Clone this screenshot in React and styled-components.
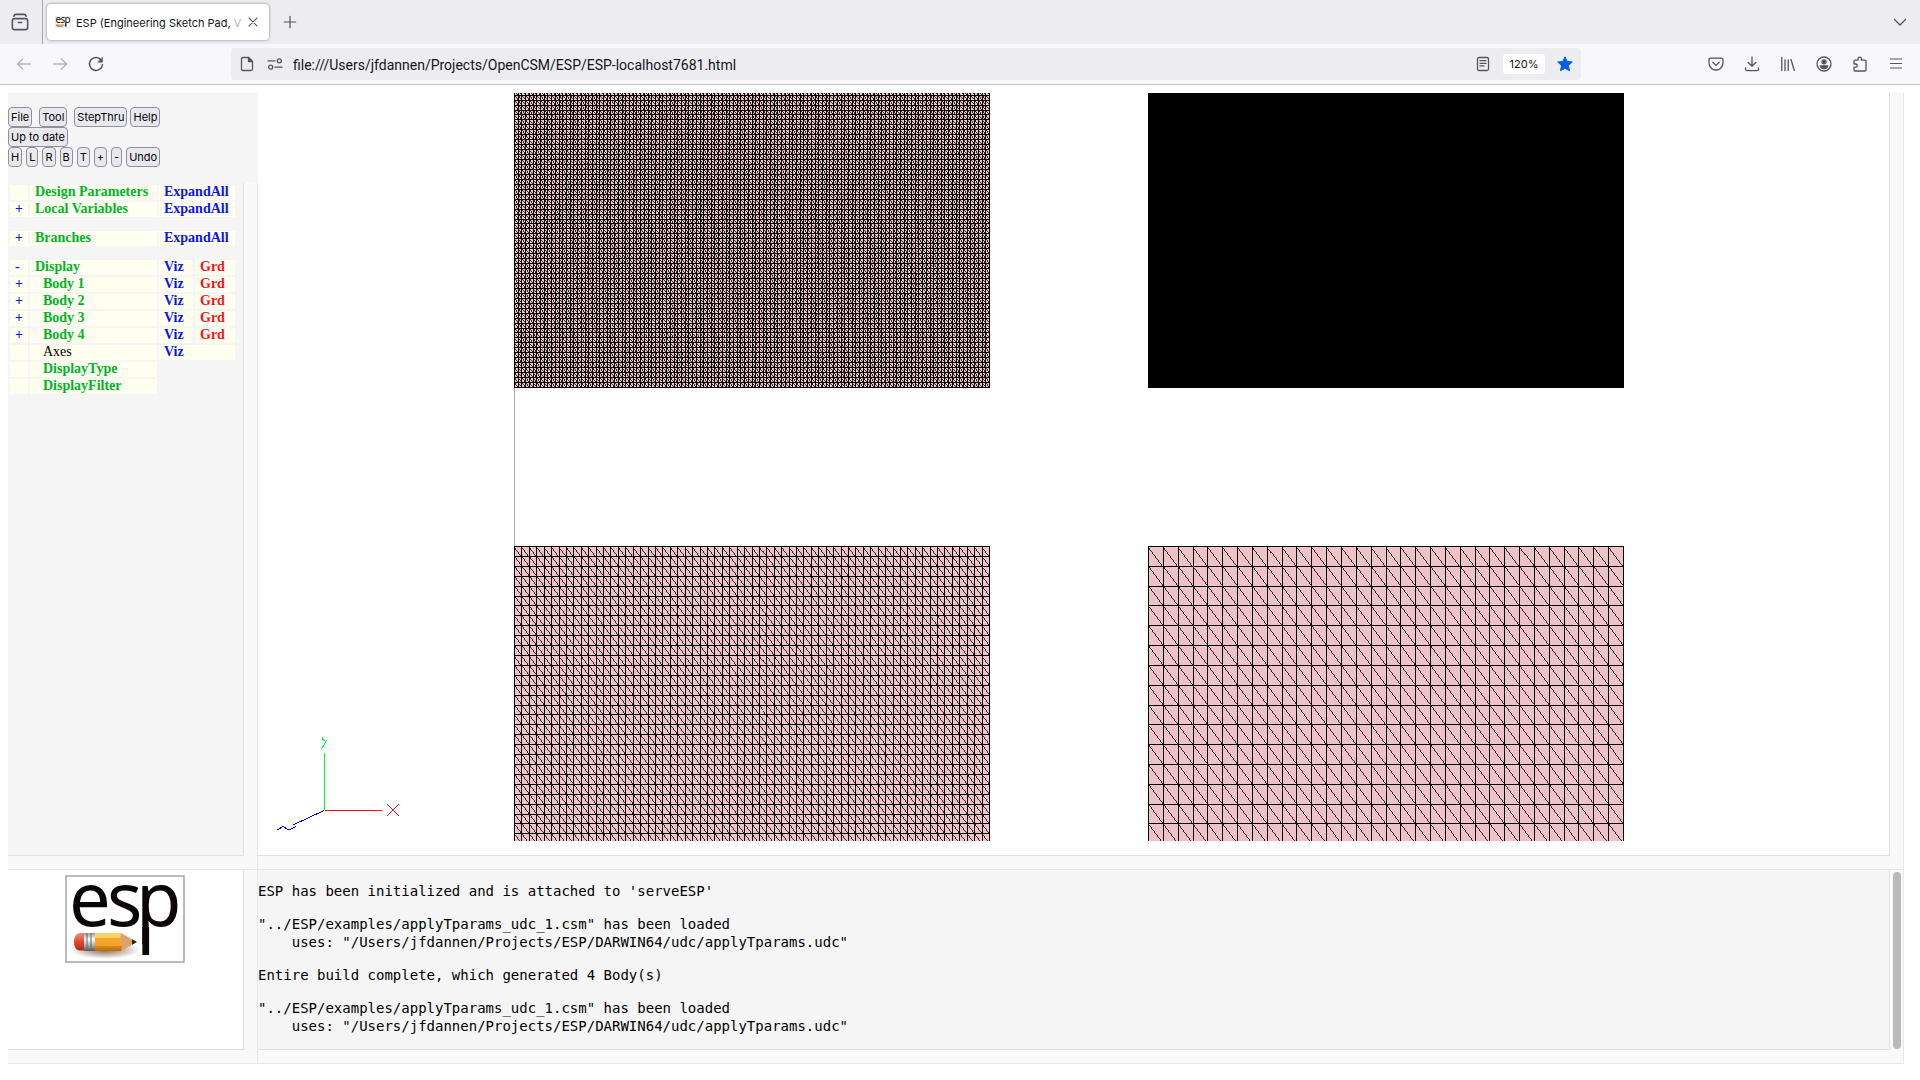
import React from "react";
import styled, { createGlobalStyle } from "styled-components";

const GlobalStyle = createGlobalStyle`
  * { box-sizing: border-box; }
  body { margin: 0; background: #fff; }
`;

const ui = `Inter, "Liberation Sans", sans-serif`;

const Window = styled.div`
  display: flex;
  flex-direction: column;
  height: 100vh;
  overflow: hidden;
  font-family: ${ui};
`;

/* ---------- browser chrome ---------- */

const TabStrip = styled.header`
  display: flex;
  align-items: center;
  flex: none;
  height: 44px;
  background: #edecf1;
`;

const StripLead = styled.div`
  display: flex;
  align-items: center;
  justify-content: center;
  width: 43px;
  height: 44px;
  padding-right: 2px;
  border-right: 1px solid #a9a8b0;
`;

const IconButton = styled.button`
  display: flex;
  align-items: center;
  justify-content: center;
  flex: none;
  width: ${(p) => p.$w || 36}px;
  height: 32px;
  padding: 0;
  border: 0;
  background: none;
  color: ${(p) => (p.$dim ? "#b3b2b9" : "#55545f")};
`;

const Tab = styled.div`
  display: flex;
  align-items: center;
  width: 222px;
  height: 36px;
  margin: 0 3px 0 4px;
  padding: 0 5px 0 8px;
  border-radius: 4px;
  background: #fff;
  box-shadow: 0 0 3px rgba(0, 0, 0, 0.45);
`;

const TabTitle = styled.span`
  flex: 1;
  margin-left: 5px;
  padding-top: 2px;
  white-space: nowrap;
  font-size: 11px;
  line-height: 18px;
  color: #15141a;
`;

const Faded = styled.span`
  color: #b5b4ba;
`;

const Spacer = styled.div`
  flex: 1;
`;

const Toolbar = styled.nav`
  display: flex;
  align-items: center;
  flex: none;
  height: 41px;
  padding: 0 6px;
  border-bottom: 1px solid #c2c2c6;
  background: #f8f8fa;
`;

const AddressBar = styled.div`
  display: flex;
  align-items: center;
  flex: 1;
  height: 32px;
  margin: 0 117px;
  padding: 0 2px;
  border-radius: 4px;
  background: #edecf1;
`;

const Address = styled.input`
  flex: 1;
  min-width: 0;
  margin-left: 4px;
  padding: 2px 0 0;
  border: 0;
  outline: 0;
  background: none;
  font-family: Roboto, ${ui};
  font-size: 14px;
  color: #15141a;
`;

const ZoomBadge = styled.button`
  width: 42px;
  height: 20px;
  margin: 0 6px;
  padding: 0;
  border: 0;
  border-radius: 3px;
  background: #fff;
  font-family: ${ui};
  font-size: 11px;
  color: #15141a;
`;

/* ---------- page ---------- */

const Page = styled.main`
  display: grid;
  grid-template-columns: 250px minmax(0, 1fr);
  grid-template-rows: minmax(0, 1fr) 194px;
  flex: 1;
  min-height: 0;
  padding: 8px 16px 16px 8px;
`;

const Sidebar = styled.aside`
  display: flex;
  flex-direction: column;
  min-height: 0;
  background: #f5f5f5;
`;

const Frame = styled.div`
  position: relative;
  display: flex;
  flex: 1;
  min-height: 0;
  min-width: 0;
  padding: 0 13px 13px 0;
  border: solid #e8e8e8;
  border-width: 0 1px 1px 0;
  background: #f9f9f9;
`;

const FrameBody = styled.div`
  flex: 1;
  min-width: 0;
  border: solid #e1e1e1;
  border-width: 0 1px 1px 0;
  background: ${(p) => p.$bg || "#fff"};
`;

const Thumb = styled.div`
  position: absolute;
  top: 2px;
  right: 2px;
  bottom: 14px;
  width: 8px;
  border-radius: 4px;
  background: #bababa;
`;

const Controls = styled.div`
  display: flex;
  flex-direction: column;
  height: 90px;
  padding-top: 14px;
`;

const ControlRow = styled.div`
  display: flex;
  gap: ${(p) => p.$gap || 3}px;
`;

const Command = styled.button`
  height: 20px;
  padding: 0 2px;
  border: 1px solid #8f8f9d;
  border-radius: 4px;
  background: #e9e9ed;
  font-family: ${ui};
  font-size: 11px;
  line-height: 18px;
  color: #000;
`;

const Tree = styled.table`
  width: 229px;
  table-layout: fixed;
  border-spacing: 2px;
  font: bold 14px/13px "Liberation Serif", serif;
`;

const Cell = styled.td`
  height: 15px;
  padding: 0 0 0 ${(p) => (p.$indent ? 13 : 5)}px;
  background: #ffffef;
  white-space: nowrap;
  vertical-align: top;
  font-weight: ${(p) => (p.$plain ? "normal" : "bold")};
  color: ${(p) => p.$color || "#00b42a"};
`;

const Gap = styled.td`
  height: 10px;
  padding: 0;
`;

const Log = styled.pre`
  margin: 0 0 15px;
  font: 14px/18px "DejaVu Sans Mono", monospace;
  color: #000;
`;

const LogList = styled.div`
  padding-top: 12px;
`;

const LogoHolder = styled.div`
  display: flex;
  justify-content: center;
  padding: 5px 2px 0 0;
`;

const Canvas = styled.svg`
  display: block;
  width: 100%;
  height: 100%;
`;

const LogoArt = styled.svg`
  overflow: visible;
`;

/* ---------- icons ---------- */

const Icon = ({ size = 16, sw = 1.3, children }) => (
  <svg width={size} height={size} viewBox="0 0 16 16" fill="none" stroke="currentColor" strokeWidth={sw} strokeLinecap="round" strokeLinejoin="round" aria-hidden="true">
    {children}
  </svg>
);

const Logo = ({ width, height }) => (
  <LogoArt width={width} height={height} viewBox="0 0 120 88" aria-label="esp logo">
    <defs>
      <linearGradient id="wood" x1="0" y1="0" x2="0" y2="1">
        <stop offset="0" stopColor="#fbd568" />
        <stop offset=".28" stopColor="#fbd060" />
        <stop offset=".3" stopColor="#f6a92c" />
        <stop offset=".7" stopColor="#f3a227" />
        <stop offset=".72" stopColor="#d98a1c" />
        <stop offset="1" stopColor="#b8690f" />
      </linearGradient>
      <linearGradient id="rubber" x1="0" y1="0" x2="0" y2="1">
        <stop offset="0" stopColor="#f4907c" />
        <stop offset=".5" stopColor="#e5472f" />
        <stop offset="1" stopColor="#a82a1a" />
      </linearGradient>
      <linearGradient id="metal" x1="0" y1="0" x2="0" y2="1">
        <stop offset="0" stopColor="#999" />
        <stop offset=".35" stopColor="#fff" />
        <stop offset=".7" stopColor="#aaa" />
        <stop offset="1" stopColor="#555" />
      </linearGradient>
      <radialGradient id="shade">
        <stop offset="0" stopColor="#5a3a20" stopOpacity=".75" />
        <stop offset="1" stopColor="#5a3a20" stopOpacity="0" />
      </radialGradient>
    </defs>
    <rect x="1" y="1" width="118" height="86" fill="#fff" stroke="#a1a8ab" strokeWidth="1.5" />
    <text y="51" x="4 42 71" fontFamily="Noto Sans, Open Sans, sans-serif" fontSize="74" fill="#0a0606">esp</text>
    <rect x="77.400" y="52" width="6.700" height="28" fill="#0a0606" />
    <ellipse cx="40" cy="75" rx="35" ry="9" fill="url(#shade)" />
    <path d="M20 58H14Q9 60 9 67T14 75.500H20Z" fill="url(#rubber)" />
    <rect x="19" y="58" width="12" height="18" fill="url(#metal)" />
    <path d="M22 58V76M26 58V76" stroke="#666" strokeWidth="1" />
    <path d="M30 58H56L60 67L56 76H30Z" fill="url(#wood)" />
    <path d="M56 58L72 67L56 76L57 70L55 64Z" fill="#dca36d" />
    <path d="M67 64.200L72 67L67 69.800Z" fill="#222" />
  </LogoArt>
);

/* ---------- 3D view ---------- */

const Mesh = ({ x, y, width, height, cols, cellH, fromBottom }) => {
  const cellW = width / cols;
  const rows = Math.ceil(height / cellH);
  const y0 = fromBottom ? y + height - rows * cellH : y;
  const bottom = y + height;
  const id = `clip${x}-${y}`;
  let grid = "";
  let diag = "";
  for (let c = 0; c <= cols; c++) grid += `M${Math.round(x + c * cellW) + 0.5} ${y}V${bottom}`;
  for (let r = 0; r <= rows; r++) {
    const ry = Math.round(y0 + r * cellH) + 0.5;
    grid += `M${x} ${ry}H${x + width + 1}`;
  }
  for (let r = 0; r < rows; r++) {
    for (let c = 0; c < cols; c++) {
      diag += `M${(x + c * cellW + 0.5).toFixed(2)} ${(y0 + r * cellH + 0.5).toFixed(2)}l${cellW.toFixed(2)} ${cellH.toFixed(2)}`;
    }
  }
  return (
    <g clipPath={`url(#${id})`} shapeRendering="crispEdges">
      <clipPath id={id}>
        <rect x={x} y={y} width={width + 1} height={height + (fromBottom ? 1 : 0)} />
      </clipPath>
      <rect x={x} y={y} width={width} height={height} fill="#edc3c9" />
      <path d={diag} stroke="#000" strokeWidth="0.800" fill="none" />
      <path d={grid} stroke="#000" fill="none" />
    </g>
  );
};

const Scene = () => (
  <Canvas role="img" aria-label="Tessellated bodies">
    <Mesh x={256} y={0} width={475} height={294} cols={128} cellH={4.955} fromBottom />
    <rect x="890" y="0" width="476" height="295" fill="#000" />
    <path d="M256.500 295V453" stroke="#aaa" shapeRendering="crispEdges" />
    <Mesh x={256} y={453} width={475} height={295} cols={64} cellH={9.91} />
    <Mesh x={890} y={453} width={475} height={295} cols={32} cellH={19.82} />
    <g fill="none" shapeRendering="crispEdges">
      <path d="M66.500 660V717" stroke="#00ff2a" />
      <path d="M64.500 644L65 646.500L67.500 648.500M69 647.500L67.500 648.500L66 652L63.500 656" stroke="#00ff2a" />
      <path d="M67 717.500H124M129 711L141 723M141 711L129 723" stroke="#f01020" />
      <path d="M66 717.500L35 732M19 737L25 733.500L31 737L38 733.500" stroke="#0000ff" />
    </g>
  </Canvas>
);

/* ---------- tree ---------- */

const BLUE = "#0a14f5";
const RED = "#fa0f1e";

const rows = [
  { label: "Design Parameters", expand: true },
  { mark: "+", label: "Local Variables", expand: true },
  null,
  { mark: "+", label: "Branches", expand: true },
  null,
  { mark: "-", label: "Display", viz: true, grd: true },
  { mark: "+", label: "Body 1", indent: true, viz: true, grd: true },
  { mark: "+", label: "Body 2", indent: true, viz: true, grd: true },
  { mark: "+", label: "Body 3", indent: true, viz: true, grd: true },
  { mark: "+", label: "Body 4", indent: true, viz: true, grd: true },
  { label: "Axes", indent: true, plain: true, viz: true },
  { label: "DisplayType", indent: true },
  { label: "DisplayFilter", indent: true },
];

const TreeRow = ({ row }) =>
  row ? (
    <tr>
      <Cell $color={BLUE}>{row.mark}</Cell>
      <Cell $indent={row.indent} $plain={row.plain} $color={row.plain && "#000"}>{row.label}</Cell>
      {row.expand && <Cell colSpan={2} $color={BLUE}>ExpandAll</Cell>}
      {row.viz && <Cell colSpan={row.grd ? 1 : 2} $color={BLUE}>Viz</Cell>}
      {row.grd && <Cell $color={RED}>Grd</Cell>}
    </tr>
  ) : (
    <tr>
      <Gap colSpan={4} />
    </tr>
  );

const loaded = `"../ESP/examples/applyTparams_udc_1.csm" has been loaded
    uses: "/Users/jfdannen/Projects/ESP/DARWIN64/udc/applyTparams.udc"`;

const messages = [
  "ESP has been initialized and is attached to 'serveESP'",
  loaded,
  "Entire build complete, which generated 4 Body(s)",
  loaded,
];

export default function App() {
  return (
    <Window>
      <GlobalStyle />
      <TabStrip>
        <StripLead>
          <IconButton aria-label="Recent browsing">
            <Icon size={18} sw={1.4}>
              <rect x="1.200" y="5" width="13.600" height="9.800" rx="2" />
              <path d="M2.500 2.800Q3 1.200 4.500 1.200H11.500Q13 1.200 13.500 2.800M6.500 8.500H9.500" />
            </Icon>
          </IconButton>
        </StripLead>
        <Tab>
          <Logo width={16} height={14} />
          <TabTitle>ESP (Engineering Sketch Pad, <Faded>V</Faded></TabTitle>
          <IconButton $w={24} aria-label="Close tab">
            <Icon size={14} sw={1.4}><path d="M3.500 3.500L12.500 12.500M12.500 3.500L3.500 12.500" /></Icon>
          </IconButton>
        </Tab>
        <IconButton aria-label="New tab">
          <Icon size={14} sw={1.4}><path d="M8 1.500V14.500M1.500 8H14.500" /></Icon>
        </IconButton>
        <Spacer />
        <IconButton $w={40} aria-label="List tabs">
          <Icon size={16}><path d="M2.500 5.500L8 11L13.500 5.500" /></Icon>
        </IconButton>
      </TabStrip>

      <Toolbar>
        <IconButton $dim aria-label="Back">
          <Icon><path d="M14.500 8H1.500M6.500 3L1.500 8L6.500 13" /></Icon>
        </IconButton>
        <IconButton $dim aria-label="Forward">
          <Icon><path d="M1.500 8H14.500M9.500 3L14.500 8L9.500 13" /></Icon>
        </IconButton>
        <IconButton aria-label="Reload">
          <Icon sw={1.5}>
            <path d="M13.200 4A6.500 6.500 0 1 0 14.500 8.500" />
            <path d="M14.500 1.500V6.200H9.800Z" fill="currentColor" strokeWidth="0.500" />
          </Icon>
        </IconButton>
        <AddressBar>
          <IconButton $w={28} aria-label="Page information">
            <Icon>
              <path d="M4 1.500H9.500L13.500 5.500V13Q13.500 14.500 12 14.500H4Q2.500 14.500 2.500 13V3Q2.500 1.500 4 1.500Z" />
              <path d="M9.500 1.500V5.500H13.500Z" fill="currentColor" />
            </Icon>
          </IconButton>
          <IconButton $w={28} aria-label="Permissions">
            <Icon>
              <circle cx="12.300" cy="4.800" r="2" />
              <circle cx="3.700" cy="11.200" r="2" />
              <path d="M1 4.800H8M8 11.200H15" />
            </Icon>
          </IconButton>
          <Address aria-label="Address" defaultValue="file:///Users/jfdannen/Projects/OpenCSM/ESP/ESP-localhost7681.html" />
          <IconButton $w={28} aria-label="Reader view">
            <Icon size={16}>
              <rect x="2.500" y="1.500" width="11" height="13" rx="1.500" />
              <path d="M5 4.700H11M5 7.300H11M5 9.900H9" />
            </Icon>
          </IconButton>
          <ZoomBadge>120%</ZoomBadge>
          <IconButton $w={28} aria-label="Bookmark">
            <svg width="16" height="16" viewBox="0 0 16 16" aria-hidden="true">
              <path d="M8 .8L10.200 5.400L15.300 6L11.500 9.500L12.500 14.800L8 12.300L3.500 14.800L4.500 9.500L.7 6L5.800 5.400Z" fill="#0560df" stroke="#0560df" strokeLinejoin="round" />
            </svg>
          </IconButton>
        </AddressBar>
        <IconButton aria-label="Pocket">
          <Icon>
            <path d="M2.500 2.200H13.500Q15 2.200 15 3.700V7A7 7 0 0 1 1 7V3.700Q1 2.200 2.500 2.200Z" />
            <path d="M4.800 6.300L8 9.400L11.200 6.300" />
          </Icon>
        </IconButton>
        <IconButton aria-label="Downloads">
          <Icon><path d="M8 .8V10M4.200 6.500L8 10.300L11.800 6.500M1.500 11.800V13Q1.500 14.600 3 14.600H13Q14.500 14.600 14.500 13V11.800" /></Icon>
        </IconButton>
        <IconButton aria-label="Library">
          <Icon><path d="M1.800 1.500V14.500M5 4V14.500M8.200 4V14.500M11 3.500L14.300 14.500" /></Icon>
        </IconButton>
        <IconButton aria-label="Account">
          <Icon>
            <circle cx="8" cy="8" r="7" />
            <circle cx="8" cy="5.800" r="2" fill="currentColor" />
            <path d="M4.300 9.800H11.700Q11 12.500 8 12.500T4.300 9.800Z" fill="currentColor" />
          </Icon>
        </IconButton>
        <IconButton aria-label="Extensions">
          <Icon><path d="M6 4.200V2.800A1.700 1.700 0 0 1 9.400 2.800V4.200H13Q14 4.200 14 5.200V14Q14 15 13 15H3Q2 15 2 14V11.200H3.600A1.600 1.600 0 0 0 3.600 8H2V5.200Q2 4.200 3 4.200Z" /></Icon>
        </IconButton>
        <IconButton aria-label="Menu">
          <Icon sw={1.2}><path d="M2.500 3H13.500M2.500 7.500H13.500M2.500 12H13.500" /></Icon>
        </IconButton>
      </Toolbar>

      <Page>
        <Sidebar>
          <Controls>
            <ControlRow $gap={7}>
              <Command>File</Command>
              <Command>Tool</Command>
              <ControlRow>
                <Command>StepThru</Command>
                <Command>Help</Command>
              </ControlRow>
            </ControlRow>
            <ControlRow>
              <Command>Up to date</Command>
            </ControlRow>
            <ControlRow $gap={4}>
              {["H", "L", "R", "B", "T", "+", "-", "Undo"].map((name) => (
                <Command key={name}>{name}</Command>
              ))}
            </ControlRow>
          </Controls>
          <Frame>
            <FrameBody $bg="#f5f5f5">
              <Tree>
                <colgroup>
                  <col width="18" />
                  <col width="127" />
                  <col width="34" />
                  <col width="40" />
                </colgroup>
                <tbody>
                  {rows.map((row, i) => (
                    <TreeRow key={i} row={row} />
                  ))}
                </tbody>
              </Tree>
            </FrameBody>
          </Frame>
        </Sidebar>
        <Frame>
          <FrameBody>
            <Scene />
          </FrameBody>
        </Frame>
        <Frame>
          <FrameBody>
            <LogoHolder>
              <Logo width={120} height={88} />
            </LogoHolder>
          </FrameBody>
        </Frame>
        <Frame>
          <FrameBody $bg="#f5f5f5">
            <LogList>
              {messages.map((text, i) => (
                <Log key={i}>{text}</Log>
              ))}
            </LogList>
          </FrameBody>
          <Thumb />
        </Frame>
      </Page>
    </Window>
  );
}
